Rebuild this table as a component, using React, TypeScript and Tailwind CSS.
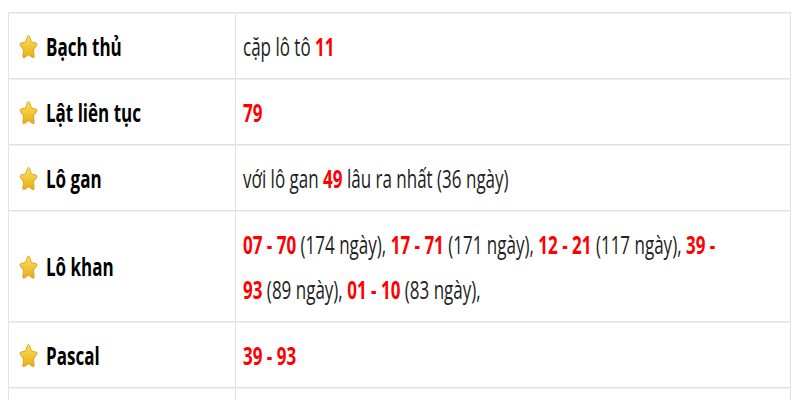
import React from 'react';

const Star = () => (
  <svg width="19" height="16" viewBox="0 0 24 22" preserveAspectRatio="none" className="shrink-0">
    <defs>
      <linearGradient id="starFill" x1="0" y1="0" x2="0" y2="1">
        <stop offset="0" stopColor="#fde05a" />
        <stop offset="1" stopColor="#e6ad17" />
      </linearGradient>
    </defs>
    <path
      d="M12 1c.6 0 1 .3 1.3.8l2.5 5.2 5.7.8c1.1.2 1.6 1.5.8 2.3l-4.1 4 1 5.7c.2 1.1-.9 1.9-1.9 1.4L12 18.5l-5.3 2.7c-1 .5-2.1-.3-1.9-1.4l1-5.7-4.1-4c-.8-.8-.3-2.1.8-2.3l5.7-.8 2.5-5.2C10.9 1.3 11.4 1 12 1z"
      fill="url(#starFill)"
      stroke="#d59c14"
      strokeWidth="0.9"
    />
  </svg>
);

const Red = ({ children }: { children: React.ReactNode }) => (
  <span className="font-bold text-[#ff0000]">{children}</span>
);

const rows: { label: string; value: React.ReactNode }[] = [
  { label: 'Bạch thủ', value: <>cặp lô tô <Red>11</Red></> },
  { label: 'Lật liên tục', value: <Red>79</Red> },
  { label: 'Lô gan', value: <>với lô gan <Red>49</Red> lâu ra nhất (36 ngày)</> },
  {
    label: 'Lô khan',
    value: (
      <>
        <Red>07 - 70</Red> (174 ngày), <Red>17 - 71</Red> (171 ngày), <Red>12 - 21</Red> (117 ngày), <Red>39 -</Red>
        <br />
        <Red>93</Red> (89 ngày), <Red>01 - 10</Red> (83 ngày),
      </>
    ),
  },
  { label: 'Pascal', value: <Red>39 - 93</Red> },
];

export default function App() {
  return (
    <div className="w-[800px] h-[400px] overflow-hidden bg-white font-['Open_Sans',sans-serif]">
      <div className="origin-top scale-y-150 pt-[8px] pl-[8px]">
        <table className="w-[783px] border-collapse text-[17px] leading-[30px] text-[#222]">
          <tbody>
            {rows.map((r) => (
              <tr key={r.label}>
                <td className="w-[227px] border border-[#e2e2e2] py-[6.5px] pl-[10px] pr-2 align-middle">
                  <div className="flex items-center gap-[8px]">
                    <Star />
                    <span className="font-bold text-black">{r.label}</span>
                  </div>
                </td>
                <td className="border border-[#e2e2e2] py-[6.5px] pl-[7px] pr-2 align-middle">{r.value}</td>
              </tr>
            ))}
            <tr>
              <td className="border border-[#e2e2e2] h-[44px]"></td>
              <td className="border border-[#e2e2e2] h-[44px]"></td>
            </tr>
          </tbody>
        </table>
      </div>
    </div>
  );
}
